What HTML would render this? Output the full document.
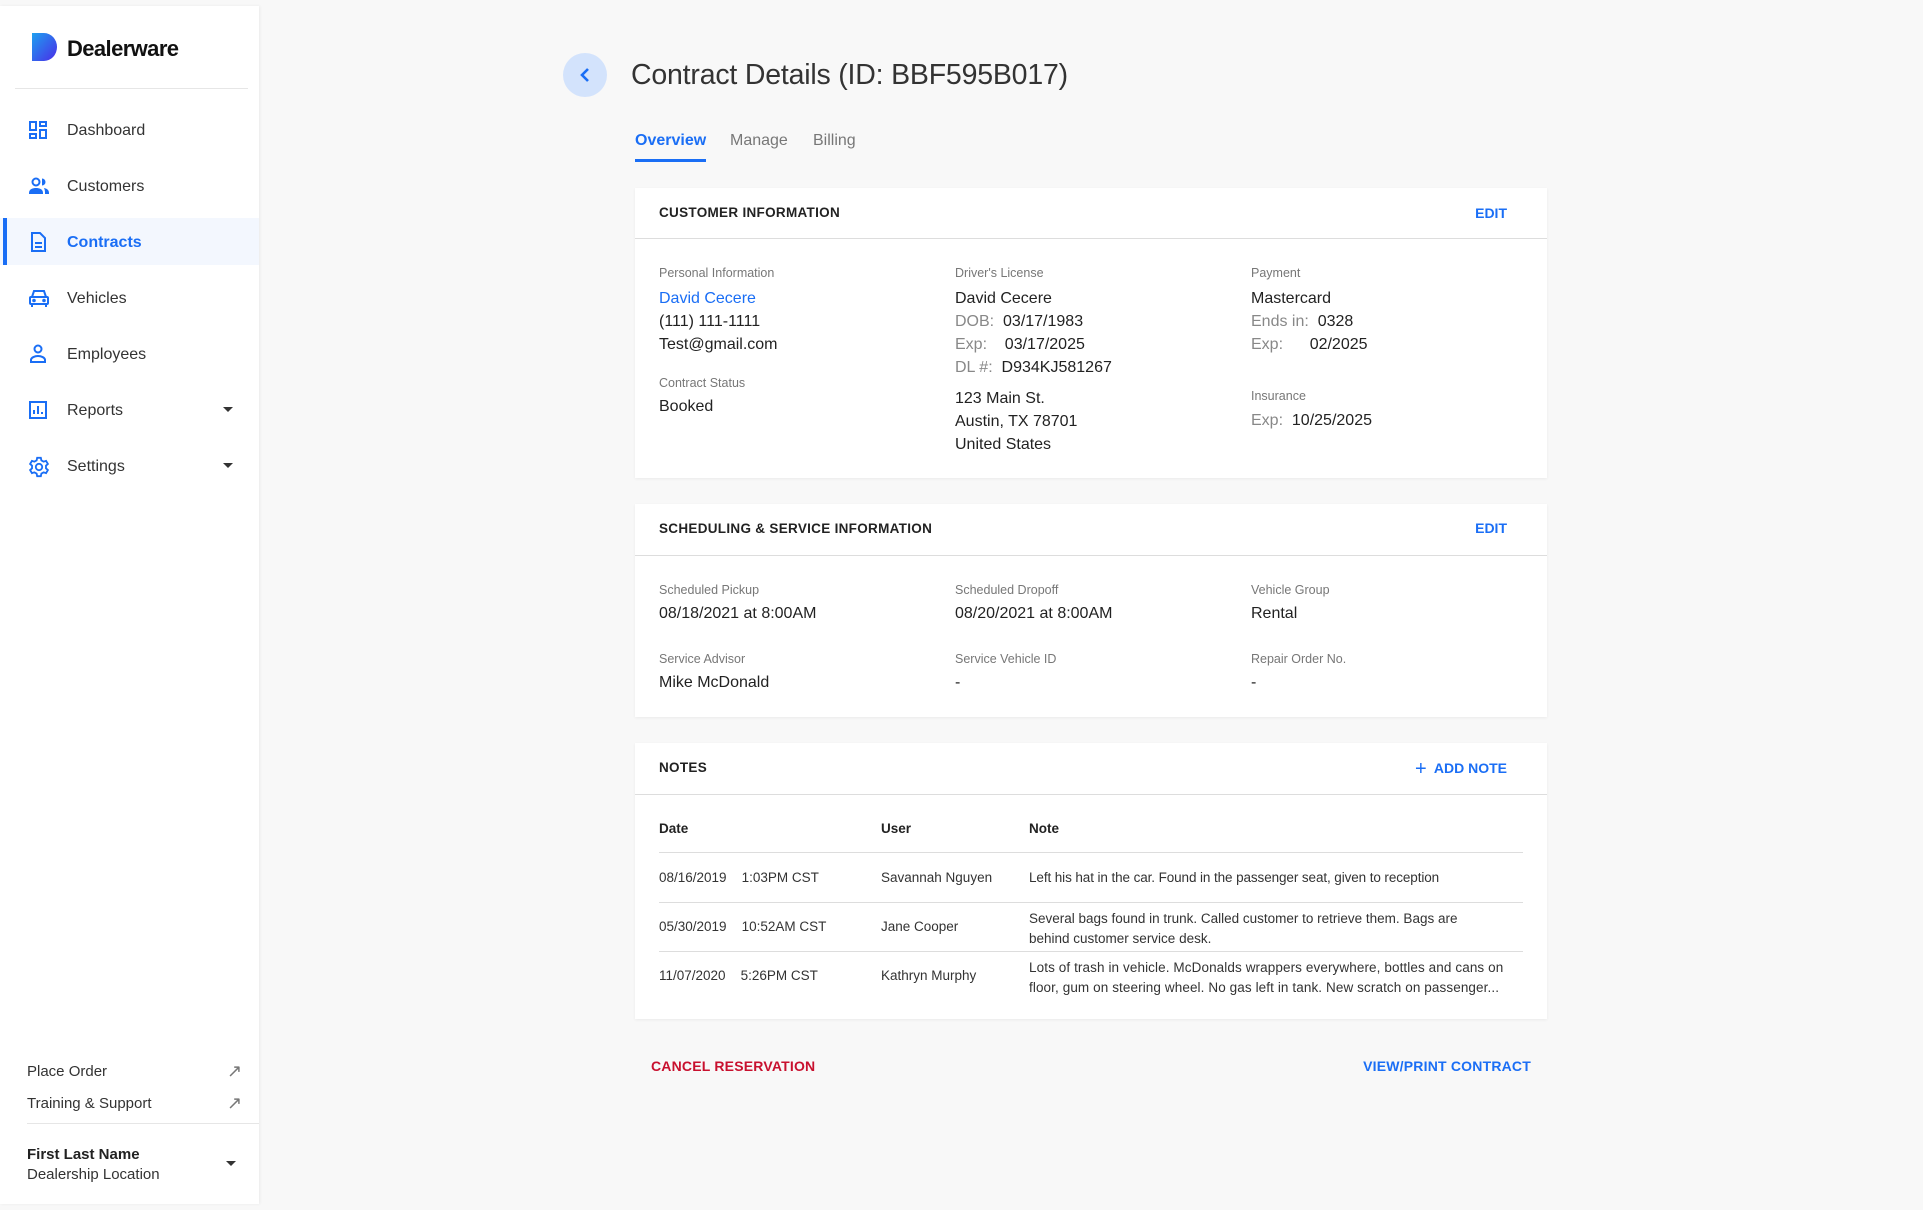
<!DOCTYPE html>
<html><head><meta charset="utf-8"><style>
*{margin:0;padding:0;box-sizing:border-box}
body{width:1923px;height:1210px;background:#f8f8f8;font-family:"Liberation Sans",sans-serif;color:#222;position:relative;overflow:hidden}
.a{position:absolute;white-space:nowrap}
.sb{position:absolute;left:0;top:6px;width:259px;height:1198px;background:#fff;box-shadow:1px 0 3px rgba(0,0,0,.06)}
.nav{position:absolute;left:0;width:259px;height:46px;font-size:16px;color:#333}
.nav span{position:absolute;left:67px;top:15px}
.nav svg{position:absolute;left:28px;top:13px}
.card{position:absolute;left:635px;width:912px;background:#fff;box-shadow:0 1px 3px rgba(0,0,0,.06)}
.hd{position:absolute;left:24px;font-size:13.5px;font-weight:bold;letter-spacing:.3px;color:#222}
.hr{position:absolute;left:0;right:0;height:1px;background:#ddd}
.lbl{font-size:12.5px;color:#777}
.v{font-size:16px;color:#222}
.g{color:#888}
.blue{color:#1a6ef5}
.t{font-size:13.5px;color:#333}
.row{position:absolute;left:24px;width:864px;height:1px;background:#ddd}
</style></head><body>
<div class="sb">
 <svg class="a" style="left:32px;top:27px" width="26" height="28" viewBox="0 0 26 28"><defs><linearGradient id="lg" x1="0" y1="0" x2="1" y2="1"><stop offset="0" stop-color="#1ea0f0"/><stop offset="1" stop-color="#4a2ce8"/></linearGradient></defs><path d="M0 0H12A13 14 0 0 1 12 28H0Z" fill="url(#lg)"/></svg>
 <div class="a" style="left:67px;top:30px;font-size:22px;font-weight:bold;color:#111;letter-spacing:-.6px">Dealerware</div>
 <div class="a" style="left:15px;top:82px;width:233px;height:1px;background:#e6e6e6"></div>
 <div class="nav" style="top:101px"><svg width="20" height="20" viewBox="0 0 20 20" fill="none" stroke="#1a6ef5" stroke-width="2"><rect x="2" y="2" width="6" height="8"/><rect x="12" y="2" width="6" height="4"/><rect x="2" y="14" width="6" height="4"/><rect x="12" y="10" width="6" height="8"/></svg><span>Dashboard</span></div>
 <div class="nav" style="top:157px"><svg width="22" height="20" viewBox="0 0 22 20" fill="#1a6ef5"><circle cx="8" cy="6" r="3.5" fill="none" stroke="#1a6ef5" stroke-width="2"/><path d="M14 2.5a3.5 3.5 0 0 1 0 7z"/><path d="M1 17c0-4 4-5 7-5s7 1 7 5v1H1z"/><path d="M16 12c3 .5 5 2 5 5v1h-4c0-2-0-4-1-6z"/></svg><span>Customers</span></div>
 <div class="a" style="left:0;top:212px;width:259px;height:47px;background:#f3f7fe"></div>
 <div class="a" style="left:3px;top:212px;width:4px;height:47px;background:#1a6ef5"></div>
 <div class="nav" style="top:213px;color:#1a6ef5;font-weight:bold"><svg width="20" height="20" viewBox="0 0 20 20" fill="none" stroke="#1a6ef5" stroke-width="2"><path d="M4 1h8l5 5v13H4z"/><path d="M7 11h7M7 15h7"/></svg><span>Contracts</span></div>
 <div class="nav" style="top:269px"><svg width="22" height="20" viewBox="0 0 22 20" fill="none" stroke="#1a6ef5" stroke-width="2"><path d="M4 9l2-6h10l2 6"/><rect x="2" y="9" width="18" height="7" rx="1"/><path d="M4 16v3M18 16v3"/><circle cx="6" cy="12.5" r=".8" fill="#1a6ef5"/><circle cx="16" cy="12.5" r=".8" fill="#1a6ef5"/></svg><span>Vehicles</span></div>
 <div class="nav" style="top:325px"><svg width="20" height="20" viewBox="0 0 20 20" fill="none" stroke="#1a6ef5" stroke-width="2"><circle cx="10" cy="5" r="3.5"/><path d="M3 18v-2c0-2.5 4-4 7-4s7 1.5 7 4v2z"/></svg><span>Employees</span></div>
 <div class="nav" style="top:381px"><svg width="20" height="20" viewBox="0 0 20 20" fill="none" stroke="#1a6ef5" stroke-width="2"><rect x="2" y="2" width="16" height="16"/><path d="M6 14v-4M10 14V6M14 14v-2"/></svg><span>Reports</span><div class="a" style="left:223px;top:20px;border:5px solid transparent;border-top:5px solid #333"></div></div>
 <div class="nav" style="top:437px"><svg width="22" height="22" viewBox="0 0 24 24" fill="none" stroke="#1a6ef5" stroke-width="2"><circle cx="12" cy="12" r="3.5"/><path d="M10 2h4l.6 2.8 2.4 1.4 2.7-.9 2 3.4-2.1 1.9v2.8l2.1 1.9-2 3.4-2.7-.9-2.4 1.4L14 22h-4l-.6-2.8-2.4-1.4-2.7.9-2-3.4 2.1-1.9v-2.8L2.3 8.7l2-3.4 2.7.9 2.4-1.4z"/></svg><span>Settings</span><div class="a" style="left:223px;top:20px;border:5px solid transparent;border-top:5px solid #333"></div></div>
 <div class="a" style="left:27px;top:1057px;font-size:15px;color:#333">Place Order</div>
 <div class="a" style="left:227px;top:1055px;font-size:18px;color:#777">↗</div>
 <div class="a" style="left:27px;top:1089px;font-size:15px;color:#333">Training &amp; Support</div>
 <div class="a" style="left:227px;top:1087px;font-size:18px;color:#777">↗</div>
 <div class="a" style="left:27px;top:1117px;width:232px;height:1px;background:#e6e6e6"></div>
 <div class="a" style="left:27px;top:1140px;font-size:15px;font-weight:bold;color:#222">First Last Name</div>
 <div class="a" style="left:27px;top:1160px;font-size:15px;color:#333">Dealership Location</div>
 <div class="a" style="left:226px;top:1155px;border:5px solid transparent;border-top:5px solid #333"></div>
</div>

<div class="a" style="left:563px;top:53px;width:44px;height:44px;border-radius:50%;background:#d3e3fc"></div>
<svg class="a" style="left:576px;top:65px" width="20" height="20" viewBox="0 0 20 20"><path d="M12 4l-6 6 6 6" fill="none" stroke="#1a6ef5" stroke-width="2.6"/></svg>
<div class="a" style="left:631px;top:59px;font-size:28.5px;color:#333;letter-spacing:-.2px">Contract Details (ID: BBF595B017)</div>
<div class="a" style="left:635px;top:132px;font-size:16px;color:#1a6ef5;font-weight:bold">Overview</div>
<div class="a" style="left:635px;top:159px;width:71px;height:3px;background:#1a6ef5"></div>
<div class="a" style="left:730px;top:132px;font-size:16px;color:#777">Manage</div>
<div class="a" style="left:813px;top:132px;font-size:16px;color:#777">Billing</div>

<div class="card" style="top:188px;height:290px">
 <div class="hd" style="top:17px">CUSTOMER INFORMATION</div>
 <div class="a blue" style="right:40px;top:17px;font-size:14px;font-weight:bold">EDIT</div>
 <div class="hr" style="top:50px"></div>
 <div class="a lbl" style="left:24px;top:78px">Personal Information</div>
 <div class="a v" style="left:24px;top:99px;line-height:23px"><span class="blue">David Cecere</span><br>(111) 111-1111<br>Test@gmail.com</div>
 <div class="a lbl" style="left:24px;top:188px">Contract Status</div>
 <div class="a v" style="left:24px;top:210px">Booked</div>
 <div class="a lbl" style="left:320px;top:78px">Driver's License</div>
 <div class="a v" style="left:320px;top:99px;line-height:23px">David Cecere<br><span class="g">DOB:</span>&nbsp; 03/17/1983<br><span class="g">Exp:</span>&nbsp;&nbsp;&nbsp; 03/17/2025<br><span class="g">DL #:</span>&nbsp; D934KJ581267</div>
 <div class="a v" style="left:320px;top:199px;line-height:23px">123 Main St.<br>Austin, TX 78701<br>United States</div>
 <div class="a lbl" style="left:616px;top:78px">Payment</div>
 <div class="a v" style="left:616px;top:99px;line-height:23px">Mastercard<br><span class="g">Ends in:</span>&nbsp; 0328<br><span class="g">Exp:</span>&nbsp;&nbsp;&nbsp;&nbsp;&nbsp; 02/2025</div>
 <div class="a lbl" style="left:616px;top:201px">Insurance</div>
 <div class="a v" style="left:616px;top:224px"><span class="g">Exp:</span>&nbsp; 10/25/2025</div>
</div>

<div class="card" style="top:504px;height:213px">
 <div class="hd" style="top:17px">SCHEDULING &amp; SERVICE INFORMATION</div>
 <div class="a blue" style="right:40px;top:16px;font-size:14px;font-weight:bold">EDIT</div>
 <div class="hr" style="top:51px"></div>
 <div class="a lbl" style="left:24px;top:79px">Scheduled Pickup</div>
 <div class="a v" style="left:24px;top:101px">08/18/2021 at 8:00AM</div>
 <div class="a lbl" style="left:320px;top:79px">Scheduled Dropoff</div>
 <div class="a v" style="left:320px;top:101px">08/20/2021 at 8:00AM</div>
 <div class="a lbl" style="left:616px;top:79px">Vehicle Group</div>
 <div class="a v" style="left:616px;top:101px">Rental</div>
 <div class="a lbl" style="left:24px;top:148px">Service Advisor</div>
 <div class="a v" style="left:24px;top:170px">Mike McDonald</div>
 <div class="a lbl" style="left:320px;top:148px">Service Vehicle ID</div>
 <div class="a v" style="left:320px;top:170px">-</div>
 <div class="a lbl" style="left:616px;top:148px">Repair Order No.</div>
 <div class="a v" style="left:616px;top:170px">-</div>
</div>

<div class="card" style="top:743px;height:276px">
 <div class="hd" style="top:17px">NOTES</div>
 <div class="a blue" style="right:40px;top:15px;font-size:14px;font-weight:bold"><span style="font-size:20px;font-weight:normal;vertical-align:-2px">+</span>&nbsp; ADD NOTE</div>
 <div class="hr" style="top:51px"></div>
 <div class="a t" style="left:24px;top:78px;font-weight:bold;color:#222">Date</div>
 <div class="a t" style="left:246px;top:78px;font-weight:bold;color:#222">User</div>
 <div class="a t" style="left:394px;top:78px;font-weight:bold;color:#222">Note</div>
 <div class="row" style="top:109px"></div>
 <div class="a t" style="left:24px;top:127px">08/16/2019&nbsp;&nbsp;&nbsp; 1:03PM CST</div>
 <div class="a t" style="left:246px;top:127px">Savannah Nguyen</div>
 <div class="a t" style="left:394px;top:127px;letter-spacing:-.1px">Left his hat in the car. Found in the passenger seat, given to reception</div>
 <div class="row" style="top:159px"></div>
 <div class="a t" style="left:24px;top:176px">05/30/2019&nbsp;&nbsp;&nbsp; 10:52AM CST</div>
 <div class="a t" style="left:246px;top:176px">Jane Cooper</div>
 <div class="a t" style="left:394px;top:166px;line-height:20px">Several bags found in trunk. Called customer to retrieve them. Bags are<br>behind customer service desk.</div>
 <div class="row" style="top:208px"></div>
 <div class="a t" style="left:24px;top:225px">11/07/2020&nbsp;&nbsp;&nbsp; 5:26PM CST</div>
 <div class="a t" style="left:246px;top:225px">Kathryn Murphy</div>
 <div class="a t" style="left:394px;top:215px;line-height:20px;letter-spacing:.1px">Lots of trash in vehicle. McDonalds wrappers everywhere, bottles and cans on<br>floor, gum on steering wheel. No gas left in tank. New scratch on passenger...</div>
</div>

<div class="a" style="left:651px;top:1058px;font-size:14px;font-weight:bold;color:#c8102e;letter-spacing:.2px">CANCEL RESERVATION</div>
<div class="a blue" style="right:392px;top:1058px;font-size:14px;font-weight:bold;letter-spacing:.2px">VIEW/PRINT CONTRACT</div>
</body></html>
